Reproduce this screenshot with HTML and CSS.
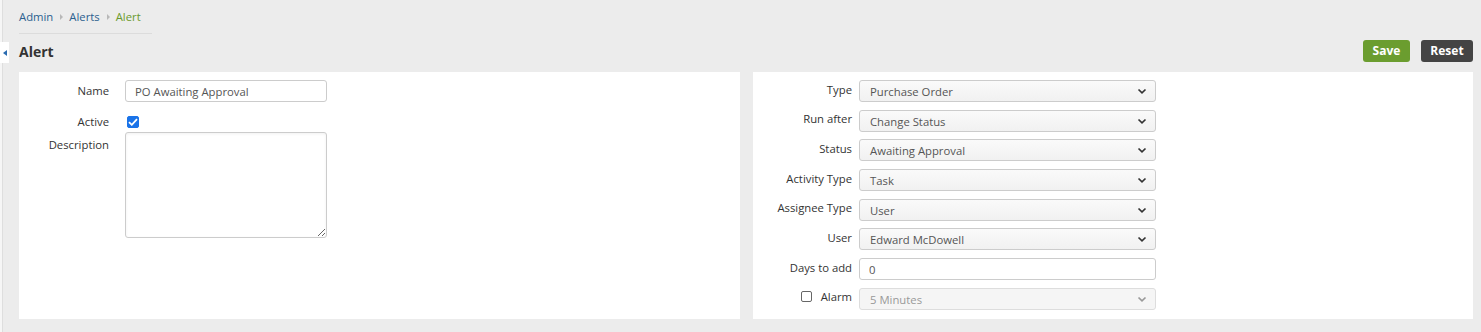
FILE: index.html
```html
<!DOCTYPE html>
<html>
<head>
<meta charset="utf-8">
<link rel="stylesheet" href="styles.css">
</head>
<body>
<div class="rail"></div>
<div class="tab"><svg width="4" height="6" viewBox="0 0 4 6"><path d="M4 0 L0 3 L4 6 Z" fill="#2a6bb0"/></svg></div>
<div class="page">
  <div class="crumbs">
    <a class="crumb">Admin</a><span class="sep"></span><a class="crumb">Alerts</a><span class="sep"></span><span class="crumb current">Alert</span>
  </div>
  <div class="header">
    <h1 class="title">Alert</h1>
    <div class="actions">
      <button class="btn save">Save</button>
      <button class="btn reset">Reset</button>
    </div>
  </div>
  <div class="panels">
    <div class="panel left">
      <div class="row"><label class="lbl">Name</label><input class="text" type="text" value="PO Awaiting Approval"></div>
      <div class="row check-row"><label class="lbl">Active</label><span class="cb checked"><svg width="10" height="8" viewBox="0 0 10 8"><path d="M1 4.2 L3.8 6.8 L9 1.2" fill="none" stroke="#fff" stroke-width="1.8"/></svg></span></div>
      <div class="row top"><label class="lbl">Description</label><div class="ta-wrap"><textarea class="ta"></textarea></div></div>
    </div>
    <div class="panel right">
      <div class="row"><label class="lbl">Type</label><div class="sel"><span>Purchase Order</span><svg class="chev" width="10" height="7" viewBox="0 0 10 7"><path d="M1.5 1.5 L5 4.8 L8.5 1.5" fill="none" stroke="#333" stroke-width="1.7"/></svg></div></div>
      <div class="row"><label class="lbl">Run after</label><div class="sel"><span>Change Status</span><svg class="chev" width="10" height="7" viewBox="0 0 10 7"><path d="M1.5 1.5 L5 4.8 L8.5 1.5" fill="none" stroke="#333" stroke-width="1.7"/></svg></div></div>
      <div class="row"><label class="lbl">Status</label><div class="sel"><span>Awaiting Approval</span><svg class="chev" width="10" height="7" viewBox="0 0 10 7"><path d="M1.5 1.5 L5 4.8 L8.5 1.5" fill="none" stroke="#333" stroke-width="1.7"/></svg></div></div>
      <div class="row"><label class="lbl">Activity Type</label><div class="sel"><span>Task</span><svg class="chev" width="10" height="7" viewBox="0 0 10 7"><path d="M1.5 1.5 L5 4.8 L8.5 1.5" fill="none" stroke="#333" stroke-width="1.7"/></svg></div></div>
      <div class="row"><label class="lbl">Assignee Type</label><div class="sel"><span>User</span><svg class="chev" width="10" height="7" viewBox="0 0 10 7"><path d="M1.5 1.5 L5 4.8 L8.5 1.5" fill="none" stroke="#333" stroke-width="1.7"/></svg></div></div>
      <div class="row"><label class="lbl">User</label><div class="sel"><span>Edward McDowell</span><svg class="chev" width="10" height="7" viewBox="0 0 10 7"><path d="M1.5 1.5 L5 4.8 L8.5 1.5" fill="none" stroke="#333" stroke-width="1.7"/></svg></div></div>
      <div class="row"><label class="lbl">Days to add</label><input class="text wide" type="text" value="0"></div>
      <div class="row"><label class="lbl alarm"><span class="cb"></span>Alarm</label><div class="sel disabled"><span>5 Minutes</span><svg class="chev" width="10" height="7" viewBox="0 0 10 7"><path d="M1.5 1.5 L5 4.8 L8.5 1.5" fill="none" stroke="#999" stroke-width="1.7"/></svg></div></div>
    </div>
  </div>
</div>
</body>
</html>
```
FILE: styles.css
```css
* { box-sizing: border-box; }
html, body { margin: 0; padding: 0; }
body {
  background: #ececec;
  font-family: "Open Sans", "Liberation Sans", sans-serif;
  font-size: 11.3px;
  color: #333;
  width: 1481px;
  height: 332px;
  overflow: hidden;
  position: relative;
}
.rail {
  position: absolute;
  left: 0; top: 0; bottom: 0;
  width: 3px;
  background: #f6f6f6;
  border-right: 1px solid #dedede;
}
.tab {
  position: absolute;
  left: 0; top: 42px;
  width: 9px; height: 21px;
  background: #fff;
  display: flex;
  align-items: center;
  padding-left: 3px;
}
.page {
  padding: 7px 8px 13px 19px;
}
.crumbs {
  display: flex;
  align-items: center;
  height: 18px;
  width: 133px;
  box-sizing: content-box;
  padding-bottom: 8px;
  border-bottom: 1px solid #dcdcdc;
}
.crumb { color: #2b5f8f; text-decoration: none; }
.crumb.current { color: #6a9a2c; }
.sep {
  width: 0; height: 0;
  border-left: 3px solid #b8b8b8;
  border-top: 3px solid transparent;
  border-bottom: 3px solid transparent;
  margin: 1px 6px 0 7px;
}
.header {
  display: flex;
  justify-content: space-between;
  align-items: center;
  height: 23px;
  margin-top: 5px;
}
.title {
  margin: 0;
  font-size: 14px;
  font-weight: 700;
  color: #333;
  position: relative;
  top: 1px;
}
.actions { display: flex; gap: 11px; }
.btn {
  font-family: inherit;
  font-size: 12px;
  font-weight: 700;
  color: #fff;
  border: none;
  border-radius: 3px;
  height: 22px;
  padding: 0;
  cursor: pointer;
}
.btn.save { background: #6b9d2f; width: 47px; }
.btn.reset { background: #444; width: 52px; }
.panels {
  display: flex;
  gap: 13px;
  margin-top: 10px;
}
.panel {
  background: #fff;
  height: 247px;
  padding-top: 8px;
}
.panel.left { width: 721px; flex: none; }
.panel.right { width: 720px; flex: none; }
.row {
  display: flex;
  align-items: center;
  height: 22px;
  margin-bottom: 8px;
}
.right .row { margin-bottom: 7.7px; }
.row.top { align-items: flex-start; }
.left .lbl { width: 90px; margin-right: 16px; }
.right .lbl { width: 99px; margin-right: 7px; top: -2px; }
.lbl {
  text-align: right;
  color: #333;
  flex: none;
  position: relative;
  top: -1px;
}
.row.top .lbl { top: 5px; }
.text {
  font-family: inherit;
  font-size: 11.3px;
  color: #555;
  width: 202px;
  height: 22px;
  border: 1px solid #ccc;
  border-radius: 3px;
  padding: 0 9px;
  background: #fff;
  outline: none;
}
.text.wide { width: 297px; }
.check-row { height: 12px; margin-bottom: 4px; margin-top: 14px; }
.cb {
  display: inline-flex;
  align-items: center;
  justify-content: center;
  width: 12px; height: 12px;
  border: 1px solid #777;
  border-radius: 2px;
  background: #fff;
  margin-left: 2px;
}
.cb.checked { background: #1a73e8; border-color: #1a73e8; }
.ta-wrap { position: relative; }
.ta {
  display: block;
  width: 202px;
  height: 106px;
  border: 1px solid #ccc;
  border-radius: 3px;
  background: #fff;
  box-shadow: inset 0 1px 3px rgba(0,0,0,0.06);
  resize: both;
  font-family: inherit;
  outline: none;
}
.sel {
  position: relative;
  width: 297px;
  height: 22px;
  border: 1px solid #ccc;
  border-radius: 3px;
  background: linear-gradient(#fafafa, #f1f1f1);
  color: #555;
  display: flex;
  align-items: center;
  padding: 1px 10px 0 10px;
}
.sel.disabled { background: #f5f5f5; color: #999; border-color: #ddd; }
.chev {
  position: absolute;
  right: 8px;
  top: 7px;
}
.lbl.alarm {
  display: flex;
  align-items: center;
  justify-content: flex-end;
  gap: 8px;
}
.lbl.alarm .cb { border-color: #666; width: 11px; height: 11px; margin-right: 1px; }
```
